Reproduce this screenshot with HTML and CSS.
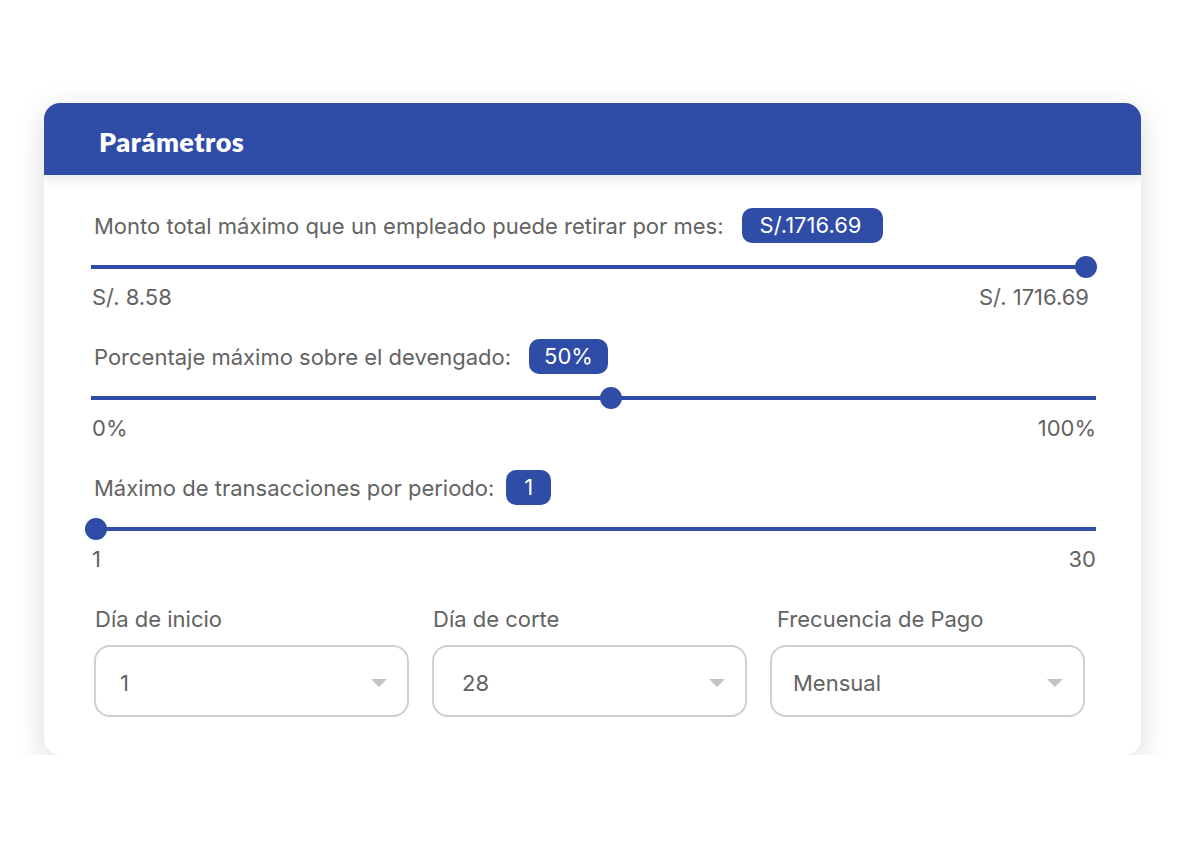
FILE: index.html
```html
<!DOCTYPE html>
<html lang="es">
<head>
    <meta charset="UTF-8">
    <meta name="viewport" content="width=device-width, initial-scale=1.0">
    <title>Parámetros</title>
    <link rel="stylesheet" href="styles.css">
</head>
<body>

<div class="card">
    <!-- Header -->
    <div class="card-header">
        <h2 class="card-title">Parámetros</h2>
    </div>

    <div class="card-body">
        <!-- Monto total -->
        <div class="field">
            <div class="field-head">
                <span class="field-label">Monto total máximo que un empleado puede retirar por mes:</span>
                <span class="badge badge-wide">S/.1716.69</span>
            </div>
            <div class="track">
                <span class="thumb" style="left: 995px;"></span>
            </div>
            <div class="range-labels range-labels-inset">
                <span>S/. 8.58</span>
                <span>S/. 1716.69</span>
            </div>
        </div>

        <!-- Porcentaje -->
        <div class="field">
            <div class="field-head">
                <span class="field-label">Porcentaje máximo sobre el devengado:</span>
                <span class="badge">50%</span>
            </div>
            <div class="track">
                <span class="thumb" style="left: 520px;"></span>
            </div>
            <div class="range-labels">
                <span>0%</span>
                <span>100%</span>
            </div>
        </div>

        <!-- Transacciones -->
        <div class="field">
            <div class="field-head field-head-tight">
                <span class="field-label">Máximo de transacciones por periodo:</span>
                <span class="badge badge-narrow">1</span>
            </div>
            <div class="track">
                <span class="thumb" style="left: 5px;"></span>
            </div>
            <div class="range-labels">
                <span>1</span>
                <span>30</span>
            </div>
        </div>

        <!-- Selects -->
        <div class="select-row">
            <div class="select-group">
                <label class="select-label">Día de inicio</label>
                <div class="select-box">
                    <span>1</span>
                    <span class="caret"></span>
                </div>
            </div>
            <div class="select-group">
                <label class="select-label">Día de corte</label>
                <div class="select-box">
                    <span class="select-value-wide">28</span>
                    <span class="caret"></span>
                </div>
            </div>
            <div class="select-group">
                <label class="select-label select-label-shift">Frecuencia de Pago</label>
                <div class="select-box select-box-tight">
                    <span>Mensual</span>
                    <span class="caret"></span>
                </div>
            </div>
        </div>
    </div>
</div>

</body>
</html>
```

FILE: styles.css
```css
body {
    margin: 0;
    background-color: #ffffff;
    font-family: Inter, "Noto Sans", sans-serif;
    color: #636363;
}

.card {
    width: 1097px;
    margin: 103px 0 0 44px;
    background-color: #ffffff;
    border-radius: 16px;
    box-shadow: 0 8px 30px rgba(0, 0, 0, 0.15);
    overflow: hidden;
}

.card-header {
    background-color: #2f4ca7;
    height: 72px;
    padding-left: 55px;
    display: flex;
    align-items: center;
    box-shadow: 0 4px 12px rgba(0, 0, 0, 0.10);
    position: relative;
}

.card-title {
    margin: 0;
    color: #ffffff;
    font-family: Lato, "Noto Sans", sans-serif;
    font-weight: 800;
    font-size: 27px;
    letter-spacing: 0.5px;
    padding-top: 4px;
}

.card-body {
    padding: 33px 45px 38px 47px;
}

.field {
    margin-bottom: 30px;
}

.field-head {
    display: flex;
    align-items: center;
    gap: 18px;
    height: 35px;
    padding-left: 3px;
}

.field-head-tight {
    gap: 12px;
}

.field-label {
    font-size: 22px;
}

.badge {
    background-color: #2f4ca7;
    color: #ffffff;
    font-size: 22px;
    height: 35px;
    line-height: 35px;
    padding: 0 15px;
    border-radius: 10px;
}

.badge-wide {
    padding: 0 22px 0 18px;
}

.badge-narrow {
    padding: 0 18px;
}

.track {
    position: relative;
    height: 4px;
    margin-top: 22px;
    background-color: #2f4ca7;
}

.thumb {
    position: absolute;
    top: -9px;
    width: 22px;
    height: 22px;
    margin-left: -11px;
    border-radius: 50%;
    background-color: #2f4ca7;
}

.range-labels {
    display: flex;
    justify-content: space-between;
    margin-top: 16px;
    font-size: 22px;
    line-height: 24px;
    padding-left: 1px;
}

.range-labels-inset {
    padding-right: 7px;
}

.select-row {
    display: grid;
    grid-template-columns: 315px 315px 315px;
    column-gap: 23px;
    margin-top: 36px;
    padding-left: 3px;
}

.select-group {
    display: flex;
    flex-direction: column;
}

.select-label {
    font-size: 22px;
    line-height: 24px;
    margin-bottom: 14px;
    padding-left: 1px;
}

.select-label-shift {
    padding-left: 7px;
}

.select-box {
    box-sizing: border-box;
    height: 72px;
    border: 2px solid #cfcfcf;
    border-radius: 16px;
    display: flex;
    align-items: center;
    justify-content: space-between;
    padding: 4px 20px 0 24px;
    font-size: 22px;
}

.select-value-wide {
    padding-left: 4px;
}

.select-box-tight {
    padding-left: 21px;
}

.caret {
    width: 0;
    height: 0;
    border-left: 8px solid transparent;
    border-right: 8px solid transparent;
    border-top: 8px solid #c4c4c4;
}
```
